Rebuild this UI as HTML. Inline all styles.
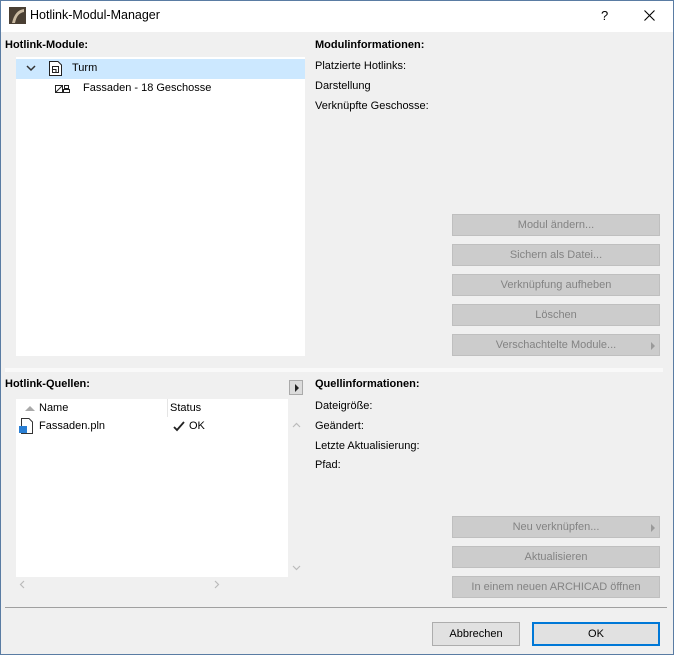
<!DOCTYPE html>
<html><head><meta charset="utf-8"><style>
*{margin:0;padding:0;box-sizing:border-box}
body{width:674px;height:655px;overflow:hidden;font-family:"Liberation Sans",sans-serif;font-size:11px;color:#000;background:#f0f0f0;position:relative}
.win{position:absolute;left:0;top:0;width:674px;height:655px;background:#f0f0f0}
.frame{position:absolute;left:0;top:0;width:674px;height:655px;border:1px solid #5a7ca3;pointer-events:none}
.title{position:absolute;left:0;top:0;width:674px;height:32px;background:#fff}
.a{position:absolute;white-space:nowrap}
.b{font-weight:bold}
.btn{position:absolute;left:452px;width:208px;height:22px;background:#cccccc;border:1px solid #bfbfbf;color:#838383;text-align:center;line-height:20px;font-size:11px}
.panel{position:absolute;background:#fff}
.tri{position:absolute;right:4px;top:7px;width:0;height:0;border-left:4px solid #9a9a9a;border-top:4px solid transparent;border-bottom:4px solid transparent}
</style></head><body><div class="win">
<div class="title">
<svg class="a" style="left:9px;top:7px" width="17" height="17"><rect width="17" height="17" fill="#4a3f33"/><path d="M3 16 Q6 3 15 2 L15 5 Q8 6 6 16Z" fill="#c9b9a0"/></svg>
<div class="a" style="left:30px;top:8px;font-size:12.5px">Hotlink-Modul-Manager</div>
<div class="a" style="left:601px;top:8px;font-size:13px">?</div>
<svg class="a" style="left:644px;top:10px" width="11" height="11"><path d="M0.5 0.5L10.5 10.5M10.5 0.5L0.5 10.5" stroke="#000" stroke-width="1.1"/></svg>
</div>
<div class="a b" style="left:5px;top:39px">Hotlink-Module:</div>
<div class="panel" style="left:16px;top:57px;width:289px;height:299px"></div>
<div class="a" style="left:16px;top:59px;width:289px;height:20px;background:#cce8ff"></div>
<svg class="a" style="left:26px;top:65px" width="10" height="7"><path d="M1 1L5 5L9 1" stroke="#333" stroke-width="1.5" fill="none"/></svg>
<svg class="a" style="left:49px;top:61px" width="13" height="15"><path d="M0.5 0.5H9L12.5 4V14.5H0.5Z" fill="#fff" stroke="#222"/><rect x="3.5" y="5.5" width="6" height="6" fill="none" stroke="#222"/><path d="M3.5 8.5H7V11.5" stroke="#222" fill="none"/></svg>
<div class="a" style="left:72px;top:62px">Turm</div>
<svg class="a" style="left:55px;top:84px" width="15" height="10"><rect x="0.5" y="1.5" width="7" height="7" fill="none" stroke="#222"/><path d="M1 8L7 2" stroke="#222"/><rect x="9.5" y="1.5" width="4" height="3" fill="none" stroke="#222"/><rect x="8.5" y="5.5" width="6" height="3" fill="none" stroke="#222"/></svg>
<div class="a" style="left:83px;top:82px">Fassaden - 18 Geschosse</div>
<div class="a b" style="left:315px;top:39px">Modulinformationen:</div>
<div class="a" style="left:315px;top:60px">Platzierte Hotlinks:</div>
<div class="a" style="left:315px;top:80px">Darstellung</div>
<div class="a" style="left:315px;top:100px">Verknüpfte Geschosse:</div>
<div class="btn" style="top:214px">Modul ändern...</div>
<div class="btn" style="top:244px">Sichern als Datei...</div>
<div class="btn" style="top:274px">Verknüpfung aufheben</div>
<div class="btn" style="top:304px">Löschen</div>
<div class="btn" style="top:334px">Verschachtelte Module...<div class="tri"></div></div>
<div class="a" style="left:5px;top:368px;width:658px;height:4px;background:#f9f9f9"></div>
<div class="a b" style="left:5px;top:378px">Hotlink-Quellen:</div>
<div class="a" style="left:289px;top:380px;width:14px;height:15px;background:#dcdcdc;border:1px solid #aaa"></div>
<div class="a" style="left:295px;top:384px;border-left:4px solid #222;border-top:4px solid transparent;border-bottom:4px solid transparent"></div>
<div class="a b" style="left:315px;top:378px">Quellinformationen:</div>
<div class="a" style="left:315px;top:400px">Dateigröße:</div>
<div class="a" style="left:315px;top:420px">Geändert:</div>
<div class="a" style="left:315px;top:440px">Letzte Aktualisierung:</div>
<div class="a" style="left:315px;top:459px">Pfad:</div>
<div class="panel" style="left:16px;top:399px;width:272px;height:178px"></div>
<div class="a" style="left:167px;top:399px;width:1px;height:18px;background:#e5e5e5"></div>
<div class="a" style="left:25px;top:406px;border-bottom:5px solid #aaa;border-left:5px solid transparent;border-right:5px solid transparent"></div>
<div class="a" style="left:39px;top:402px">Name</div>
<div class="a" style="left:170px;top:402px">Status</div>
<svg class="a" style="left:18px;top:418px" width="16" height="16"><path d="M3.5 0.5H11L14.5 4V15.5H3.5Z" fill="#fff" stroke="#333"/><rect x="1" y="8" width="8" height="7" fill="#2a7fd4"/></svg>
<div class="a" style="left:39px;top:420px">Fassaden.pln</div>
<svg class="a" style="left:173px;top:421px" width="12" height="11"><path d="M1 6L4 9L11 1" stroke="#222" stroke-width="1.8" fill="none"/></svg>
<div class="a" style="left:189px;top:420px">OK</div>
<svg class="a" style="left:292px;top:422px" width="9" height="6"><path d="M1 5L4.5 1.5L8 5" stroke="#bbb" stroke-width="1.2" fill="none"/></svg>
<svg class="a" style="left:292px;top:565px" width="9" height="6"><path d="M1 1L4.5 4.5L8 1" stroke="#bbb" stroke-width="1.2" fill="none"/></svg>
<svg class="a" style="left:19px;top:580px" width="6" height="9"><path d="M5 1L1.5 4.5L5 8" stroke="#bbb" stroke-width="1.2" fill="none"/></svg>
<svg class="a" style="left:214px;top:580px" width="6" height="9"><path d="M1 1L4.5 4.5L1 8" stroke="#bbb" stroke-width="1.2" fill="none"/></svg>
<div class="btn" style="top:516px">Neu verknüpfen...<div class="tri"></div></div>
<div class="btn" style="top:546px">Aktualisieren</div>
<div class="btn" style="top:576px">In einem neuen ARCHICAD öffnen</div>
<div class="a" style="left:5px;top:607px;width:662px;height:1px;background:#a0a0a0"></div>
<div class="a" style="left:432px;top:622px;width:88px;height:24px;background:#e1e1e1;border:1px solid #adadad;text-align:center;line-height:22px">Abbrechen</div>
<div class="a" style="left:532px;top:622px;width:128px;height:24px;background:#e1e1e1;border:2px solid #0078d7;text-align:center;line-height:20px">OK</div>
<div class="frame"></div>
</div></body></html>
